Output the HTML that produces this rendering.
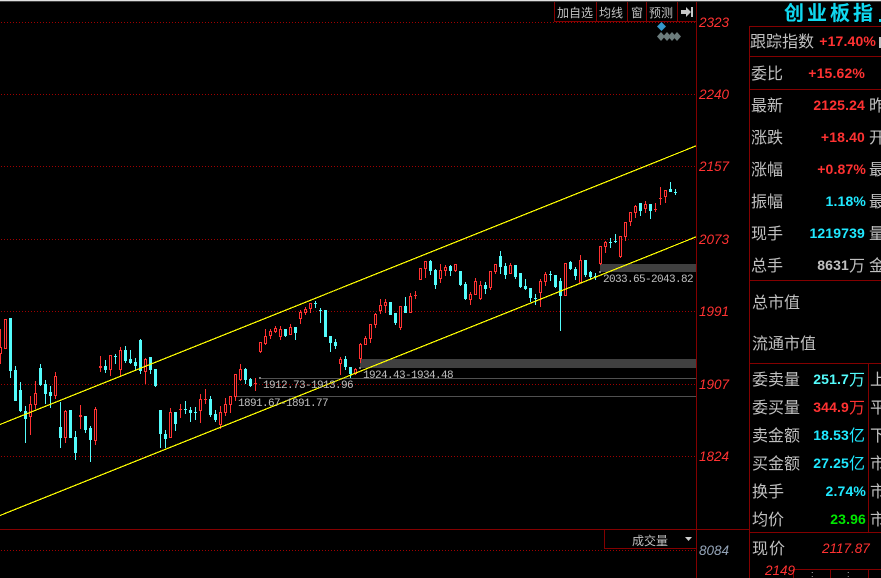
<!DOCTYPE html>
<html lang="zh">
<head>
<meta charset="utf-8">
<title>创业板指</title>
<style>
html,body{margin:0;padding:0;background:#000;width:881px;height:578px;overflow:hidden}
svg{display:block;position:absolute;left:0;top:0}
text{font-family:"Liberation Sans","WenQuanYi Zen Hei","Noto Sans CJK SC",sans-serif}
.l{fill:#c0c0c0;font-size:16px;font-family:"WenQuanYi Zen Hei","Noto Sans CJK SC",sans-serif}
.b{fill:#c0c0c0;font-size:12px;font-family:"WenQuanYi Zen Hei","Noto Sans CJK SC",sans-serif}
.v{font-size:14px;font-weight:bold;text-anchor:end;letter-spacing:.15px}
.r{fill:#ff3232}.c{fill:#20e8ff}.g{fill:#c0c0c0}
.a{font-size:13.5px;font-style:italic;fill:#ff3232}
.m{font-family:"Liberation Mono",monospace;font-size:11px;fill:#c0c0c0;letter-spacing:-.6px}
</style>
</head>
<body>
<svg id="s" width="881" height="578" viewBox="0 0 881 578" xmlns="http://www.w3.org/2000/svg">
<rect width="881" height="578" fill="#000"/>
<rect width="881" height="1" fill="#e0e0e0"/>
<rect y="1" width="881" height="1" fill="#444"/>
<g stroke="#a00000" stroke-dasharray="1 2" shape-rendering="crispEdges" fill="none">
<path d="M1 22.5H697M1 94.5H697M1 166.5H697M1 239.5H697M1 311.5H697M1 384.5H697M1 456.5H697M1 550.5H697"/>
</g>
<g shape-rendering="crispEdges">
<rect x="360" y="359" width="337" height="9" fill="#404040"/>
<rect x="600" y="264" width="97" height="8" fill="#404040"/>
<rect x="260" y="378" width="437" height="1" fill="#505050"/>
<rect x="235" y="396" width="462" height="1" fill="#505050"/>
<rect x="359" y="367" width="2" height="2" fill="#808080"/>
<rect x="599" y="271" width="2" height="2" fill="#808080"/>
<rect x="259" y="377" width="2" height="2" fill="#808080"/>
<rect x="234" y="395" width="2" height="2" fill="#808080"/>
</g>
<g id="k" shape-rendering="crispEdges"></g>
<g stroke="#ffff00" stroke-width="1.2" shape-rendering="crispEdges" fill="none">
<path d="M0 424.500L697 145.500"/>
<path d="M0 515.500L697 236.500"/>
</g>
<g stroke="#840000" shape-rendering="crispEdges" fill="none">
<path d="M696.500 2V578M749.500 26V578M749 26.500H881M749 56.500H881M749 89.500H881M749 280.500H881M749 363.500H881M868.500 363V532M749 532.500H881M0 529.500H749M604.500 529V548.500H697"/>
<path d="M793.500 578V569.500H881M830.500 569V578M868.500 569V578"/>
<path d="M554.500 2V21.500H697M596.500 2V21M627.500 2V21M646.500 2V21M677.500 2V21"/>
</g>
<text class="b" x="557" y="17">加自选</text>
<text class="b" x="599" y="17">均线</text>
<text class="b" x="631" y="17">窗</text>
<text class="b" x="649" y="17">预测</text>
<path d="M681 10H686V7L691 12L686 17V14H681Z" fill="#c8c8c8"/>
<rect x="691" y="7" width="2" height="10" fill="#c8c8c8"/>
<path d="M661.500 22L666 26.500L661.500 31L657 26.500Z" fill="#3399cc"/>
<path d="M661 32L665 36.500L661 41L657 36.500ZM667 32L671 36.500L667 41L663 36.500ZM672 32L676 36.500L672 41L668 36.500ZM677 32L681 36.500L677 41L673 36.500Z" fill="#6c7c7c"/>
<text class="a" x="699" y="27">2323</text>
<text class="a" x="699" y="99">2240</text>
<text class="a" x="699" y="171">2157</text>
<text class="a" x="699" y="244">2073</text>
<text class="a" x="699" y="316">1991</text>
<text class="a" x="699" y="389">1907</text>
<text class="a" x="699" y="461">1824</text>
<text class="a" x="699" y="555" style="fill:#94a4b8">8084</text>
<text class="m" x="603" y="282">2033.65-2043.82</text>
<text class="m" x="363" y="378">1924.43-1934.48</text>
<text class="m" x="263" y="388">1912.73-1913.96</text>
<text class="m" x="238" y="406">1891.67-1891.77</text>
<text class="b" x="632" y="545">成交量</text>
<path d="M685 537H692L688.500 541Z" fill="#d0d0d0"/>
<g style="font-size:20px;fill:#10d8f0;font-weight:bold;font-family:'WenQuanYi Zen Hei','Noto Sans CJK SC',sans-serif">
<text x="784" y="20">创</text><text x="807" y="20">业</text><text x="830" y="20">板</text><text x="853" y="20">指</text>
</g>
<rect x="879" y="19" width="2" height="3" fill="#10d8f0"/>
<text class="l" x="750" y="47">跟踪指数</text>
<text class="v r" x="876" y="46">+17.40%</text>
<rect x="879" y="37" width="2" height="11" fill="#c0c0c0"/>
<text class="l" x="751" y="79">委比</text><text class="v r" x="865" y="78">+15.62%</text>
<text class="l" x="751" y="111">最新</text><text class="v r" x="865" y="110">2125.24</text><text class="l" x="869" y="111">昨</text>
<text class="l" x="751" y="143">涨跌</text><text class="v r" x="865" y="142">+18.40</text><text class="l" x="869" y="143">开</text>
<text class="l" x="751" y="175">涨幅</text><text class="v r" x="866" y="174">+0.87%</text><text class="l" x="869" y="175">最</text>
<text class="l" x="751" y="207">振幅</text><text class="v c" x="866" y="206">1.18%</text><text class="l" x="869" y="207">最</text>
<text class="l" x="751" y="239">现手</text><text class="v c" x="865" y="238">1219739</text><text class="l" x="869" y="239">量</text>
<text class="l" x="751" y="271">总手</text><text class="v g" x="849" y="270">8631</text><text class="l" x="849" y="271">万</text><text class="l" x="869" y="271">金</text>
<text class="l" x="752" y="308">总市值</text>
<text class="l" x="752" y="349">流通市值</text>
<text class="l" x="752" y="385">委卖量</text><text class="v" style="fill:#54fcfc" x="849" y="384">251.7</text><text class="l" style="fill:#54fcfc" x="849" y="385">万</text><text class="l" x="870" y="385">上</text>
<text class="l" x="752" y="413">委买量</text><text class="v r" x="849" y="412">344.9</text><text class="l r" x="849" y="413">万</text><text class="l" x="870" y="413">平</text>
<text class="l" x="752" y="441">卖金额</text><text class="v c" x="849" y="440">18.53</text><text class="l c" x="849" y="441">亿</text><text class="l" x="870" y="441">下</text>
<text class="l" x="752" y="469">买金额</text><text class="v c" x="849" y="468">27.25</text><text class="l c" x="849" y="469">亿</text><text class="l" x="870" y="469">市</text>
<text class="l" x="752" y="497">换手</text><text class="v c" x="866" y="496">2.74%</text><text class="l" x="870" y="497">市</text>
<text class="l" x="752" y="525">均价</text><text class="v" style="fill:#00e800" x="866" y="524">23.96</text><text class="l" x="870" y="525">市</text>
<text class="l" x="752" y="554" letter-spacing="1">现价</text>
<text class="a" x="822" y="553">2117.87</text>
<text class="a" x="765" y="575">2149</text>
<text x="811" y="577" style="font-size:9px;fill:#c0c0c0">:</text>
<text x="847" y="577" style="font-size:9px;fill:#c0c0c0">:</text>
</svg>
<script>
var R="0,329,363,347,353 5,319,348,319,348 30,396,434,404,416 35,381,408,393,404 55,372,398,376,395 65,410,442,411,437 80,405,428,415,416 95,407,444,409,440 100,356,371,366,367 110,355,375,355,369 120,347,376,350,369 145,358,383,359,371 170,408,437,412,437 180,404,417,409,409 200,394,422,399,410 205,389,403,399,399 220,406,428,412,424 225,398,415,404,412 230,396,412,396,404 235,374,400,374,396 240,364,380,369,379 255,378,390,383,383 260,342,352,342,351 265,329,344,336,343 270,329,338,331,335 275,326,332,328,331 280,326,339,329,336 290,324,334,327,334 300,310,323,312,318 305,307,314,309,312 310,303,312,303,308 340,357,374,359,363 355,368,374,369,373 360,343,362,344,358 365,336,344,338,344 370,324,342,324,338 375,313,327,314,324 380,299,313,305,310 385,299,312,302,305 400,306,329,306,327 410,293,312,296,312 415,291,298,295,295 420,268,279,268,279 425,261,277,261,268 440,264,282,270,278 445,265,275,267,270 455,264,271,264,270 470,292,304,294,299 475,278,294,281,294 480,281,299,285,298 490,271,289,271,287 495,264,273,264,271 510,263,273,265,273 540,279,306,281,292 545,272,285,274,281 565,263,295,263,295 580,255,282,260,282 600,246,264,246,263 605,241,252,242,246 620,236,257,236,256 625,222,240,222,236 630,212,225,212,221 635,205,217,206,212 645,201,212,204,208 655,203,211,209,209 660,187,204,198,198 665,190,202,190,196";
var C="10,318,377,318,370 15,366,400,370,400 20,382,411,390,410 25,406,442,411,418 40,364,385,368,384 45,380,403,384,393 50,386,407,392,395 60,402,447,427,437 70,410,437,410,437 75,431,459,437,452 85,416,432,416,429 90,426,461,428,439 105,360,372,366,369 115,354,363,356,356 125,346,362,350,360 130,350,363,359,362 135,358,369,362,365 140,339,373,340,370 150,357,373,357,369 155,369,386,369,385 160,410,447,410,433 165,430,447,434,438 175,412,430,412,423 185,401,413,409,409 190,407,421,410,412 195,407,419,412,412 210,396,416,399,414 215,410,421,414,419 245,368,383,369,379 250,378,386,379,385 285,329,336,329,335 295,327,339,327,332 315,301,307,303,303 320,308,322,310,310 325,310,336,310,336 330,336,351,336,342 335,339,348,342,345 345,356,369,359,366 350,367,377,367,373 390,302,314,302,314 395,313,324,313,322 405,297,312,306,312 430,260,274,261,270 435,269,288,270,284 450,265,275,266,270 460,271,285,271,284 465,282,299,284,298 485,282,293,285,288 500,251,273,256,266 505,263,278,266,274 515,265,278,265,276 520,273,287,273,286 525,279,289,286,288 530,288,301,288,297 535,294,304,298,298 550,271,280,274,274 555,275,287,275,286 560,278,330,281,295 570,261,269,262,268 575,267,279,269,275 585,260,276,260,274 590,271,279,272,276 595,273,279,276,276 610,238,247,242,242 615,234,242,241,241 640,203,215,203,210 650,204,218,204,210 670,182,191,189,191 675,189,194,192,192";
function d(s){return s.split(" ").map(function(t){return t.split(",").map(Number)})}
var h="";
d(C).forEach(function(a){h+='<rect x="'+a[0]+'" y="'+a[1]+'" width="1" height="'+(a[2]-a[1]+1)+'" fill="#54fcfc"/><rect x="'+(a[0]-1)+'" y="'+a[3]+'" width="3" height="'+(a[4]-a[3]+1)+'" fill="#54fcfc"/>'});
d(R).forEach(function(a){h+='<rect x="'+a[0]+'" y="'+a[1]+'" width="1" height="'+(a[2]-a[1]+1)+'" fill="#ff3232"/><rect x="'+(a[0]-1)+'" y="'+a[3]+'" width="3" height="'+(a[4]-a[3]+1)+'" fill="#ff3232"/>';
if(a[4]-a[3]>=2)h+='<rect x="'+a[0]+'" y="'+(a[3]+1)+'" width="1" height="'+(a[4]-a[3]-1)+'" fill="#000"/>'});
document.getElementById("k").innerHTML=h;
</script>
</body>
</html>
